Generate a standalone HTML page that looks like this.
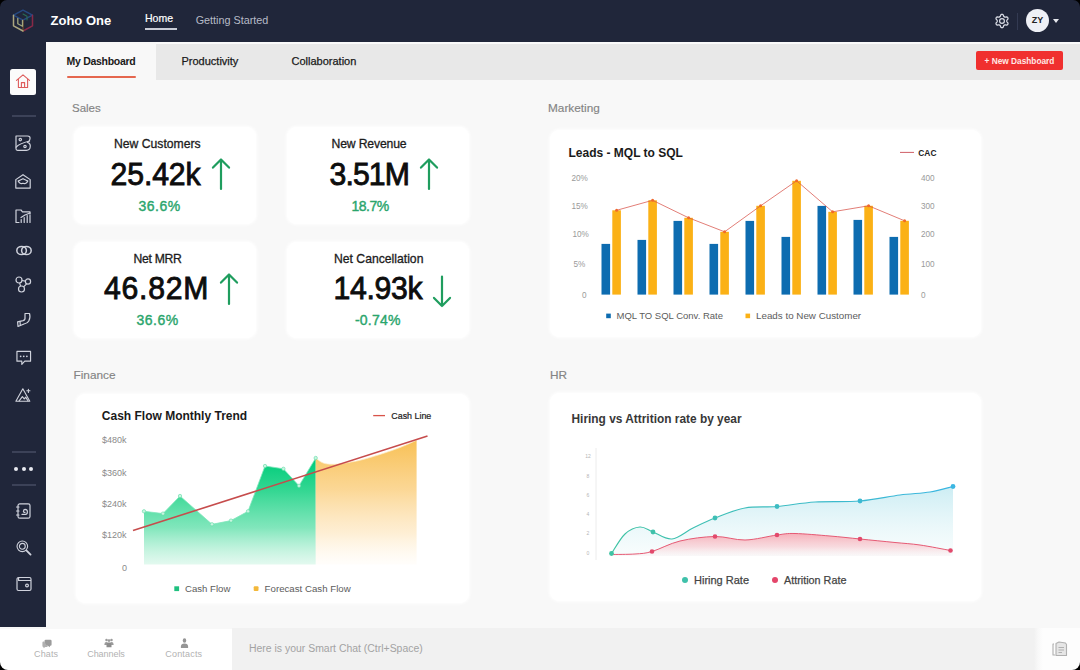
<!DOCTYPE html>
<html><head><meta charset="utf-8">
<style>
*{box-sizing:border-box;margin:0;padding:0}
html,body{width:1080px;height:670px;overflow:hidden;background:#000}
body{font-family:"Liberation Sans",sans-serif;position:relative}
#app{position:absolute;left:0;top:0;width:1080px;height:670px}
#content{left:0;top:40px;width:1080px;height:600px;background:#f8f8f8}
.abs{position:absolute}
#top{left:0;top:0;width:1080px;height:42px;background:#20263a;border-radius:7px 7px 0 0}
#side{left:0;top:42px;width:46px;height:585.4px;background:#20263a}
#tabs{left:46px;top:42px;width:1034px;height:38px;background:#e8e8e8}
#tabsline{left:46px;top:42px;width:1034px;height:2px;background:#fafafa}
#tab1{left:46px;top:42px;width:110px;height:38px;background:#f8f8f8}
.t{position:absolute;white-space:nowrap;line-height:1}
.card{position:absolute;background:#fff;border-radius:9px;box-shadow:0 0 3px 1px rgba(255,255,255,0.95)}
.sec{color:#848484;font-size:12px;-webkit-text-stroke:0.15px #848484}
.kt{color:#1c1c1c;font-size:12.2px;-webkit-text-stroke:0.3px #1c1c1c}
.kv{color:#0d0d0d;font-size:30.2px;-webkit-text-stroke:0.85px #0d0d0d;transform:scaleY(1.035);transform-origin:50% 82%}
.kp{color:#2aa56c;font-size:14px;-webkit-text-stroke:0.4px #2aa56c}
#bot1{left:0;top:628.6px;width:232px;height:41.4px;background:#fff;border-radius:0 0 0 8px}
#bot2{left:232px;top:628px;width:803px;height:42px;background:#f1f1f1}
#bot3{left:1034px;top:628px;width:46px;height:42px;background:linear-gradient(to right,#f1f1f1 0,#f8f8f8 4px,#fdfdfd 9px);border-radius:0 0 8px 0}
</style></head><body>
<div id="app">
<div id="content" class="abs"></div>
<div id="top" class="abs"></div>
<div id="side" class="abs"></div>
<div id="tabs" class="abs"></div>
<div id="tabsline" class="abs"></div>
<div id="tab1" class="abs"></div>

<!-- logo -->
<svg class="abs" style="left:11px;top:8px;opacity:0.85" width="24" height="25" viewBox="0 0 24 25">
 <g fill="none" stroke-width="1.5" stroke-linejoin="round" stroke-linecap="round">
  <path d="M12 2.2 L21.5 7.2 L12 12.2 L2.5 7.2 Z" stroke="#27508f"/>
  <path d="M21.5 7.2 L21.5 17.8 L12 23" stroke="#9b2a4a"/>
  <path d="M12 12.2 L12 23" stroke="#6b4a2a"/>
  <path d="M2.5 7.2 L2.500 17.800 L12 23" stroke="#c4bd8c"/>
  <path d="M6.8 10.500 L6.800 15.800 L11.500 18.300 V12.500" stroke="#b9bd8a" stroke-width="1.300"/>
  <path d="M12 6 L16 8.200 L16 12" stroke="#2c7a5a" stroke-width="1.100"/>
 </g>
</svg>
<div class="t" style="left:50.5px;top:14px;font-size:13px;font-weight:700;color:#fff">Zoho One</div>
<div class="t" style="left:145px;top:13px;font-size:10.5px;color:#fff;-webkit-text-stroke:0.2px #fff">Home</div>
<div class="abs" style="left:145px;top:28px;width:32px;height:1.5px;background:#c9ccd6"></div>
<div class="t" style="left:195.7px;top:14.8px;font-size:10.8px;color:#b7bbc7">Getting Started</div>
<!-- gear -->
<svg class="abs" style="left:993.5px;top:13.2px" width="16" height="16" viewBox="0 0 16 16">
 <path d="M13.80 11.35 L13.32 11.87 L12.60 12.14 L11.48 11.87 L10.83 11.90 L10.35 12.07 L9.96 12.40 L9.61 12.95 L9.29 14.06 L8.69 14.54 L8.00 14.70 L7.31 14.54 L6.71 14.06 L6.39 12.95 L6.04 12.40 L5.65 12.07 L5.17 11.90 L4.52 11.87 L3.40 12.14 L2.68 11.87 L2.20 11.35 L1.99 10.68 L2.11 9.91 L2.91 9.08 L3.21 8.50 L3.30 8.00 L3.21 7.50 L2.91 6.92 L2.11 6.09 L1.99 5.32 L2.20 4.65 L2.68 4.13 L3.40 3.86 L4.52 4.13 L5.17 4.10 L5.65 3.93 L6.04 3.60 L6.39 3.05 L6.71 1.94 L7.31 1.46 L8.00 1.30 L8.69 1.46 L9.29 1.94 L9.61 3.05 L9.96 3.60 L10.35 3.93 L10.83 4.10 L11.48 4.13 L12.60 3.86 L13.32 4.13 L13.80 4.65 L14.01 5.32 L13.89 6.09 L13.09 6.92 L12.79 7.50 L12.70 8.00 L12.79 8.50 L13.09 9.08 L13.89 9.91 L14.01 10.68 Z" fill="none" stroke="#d9dce5" stroke-width="1.25" stroke-linejoin="round"/>
 <circle cx="8" cy="8" r="2.4" fill="none" stroke="#d9dce5" stroke-width="1.2"/>
</svg>
<div class="abs" style="left:1017px;top:13px;width:1px;height:17px;background:#333a52"></div>
<div class="abs" style="left:1026px;top:9px;width:23px;height:23px;border-radius:50%;background:#eef0f6"></div>
<div class="t" style="left:1026px;top:16px;width:23px;text-align:center;font-size:9px;font-weight:700;color:#222">ZY</div>
<div class="abs" style="left:1053px;top:19px;width:0;height:0;border-left:3.5px solid transparent;border-right:3.5px solid transparent;border-top:4px solid #e6e8ee"></div>


<div class="abs" style="left:10px;top:69px;width:26px;height:26px;border-radius:2.5px;background:#fbfbfb"></div>
<svg class="abs" style="left:15px;top:73px" width="16" height="16" viewBox="0 0 16 16"><g fill="none" stroke="#de5b5b" stroke-width="1.1" stroke-linejoin="round" stroke-linecap="round">
 <path d="M1.5 7.3 L8 1.8 L14.5 7.3"/><path d="M3.4 6.2 V14.5 H12.6 V6.2"/><path d="M6.4 14.5 V9.6 H9.6 V14.5"/></g></svg>
<div class="abs" style="left:12px;top:115px;width:24px;height:1.5px;background:#3c4258"></div>

<!-- icon1: B-like -->
<svg class="abs" style="left:14px;top:134px" width="18" height="18" viewBox="0 0 18 18"><g fill="none" stroke="#cfd2dc" stroke-width="1.2" stroke-linejoin="round" stroke-linecap="round">
 <path d="M2 2 H13.5 Q16.5 2 16 5 Q15.6 7.6 13.5 8.4 Q16.8 9.5 16.2 13 Q15.8 16.3 12.5 16.3 H3.5 Q2 16.3 2 14.8 Z"/>
 <path d="M2.2 13.2 Q5 9.6 15.6 7"/><circle cx="6.3" cy="5.6" r="1.2"/><circle cx="11" cy="12.5" r="1.2"/></g></svg>
<!-- icon2: open envelope -->
<svg class="abs" style="left:14px;top:172.6px" width="18" height="17" viewBox="0 0 18 18" preserveAspectRatio="none"><g fill="none" stroke="#cfd2dc" stroke-width="1.2" stroke-linejoin="round" stroke-linecap="round">
 <path d="M1.8 7 L9 1.8 L16.2 7 V16 H1.8 Z"/><path d="M4.3 8.5 Q5.8 12.3 9 10.8 Q12.2 12.3 13.7 8.5"/><path d="M4.3 8.5 L9 6 L13.7 8.5"/></g></svg>
<!-- icon3: folder chart -->
<svg class="abs" style="left:14px;top:207px" width="18" height="18" viewBox="0 0 18 18"><g fill="none" stroke="#cfd2dc" stroke-width="1.2" stroke-linejoin="round" stroke-linecap="round">
 <path d="M5 15.5 H2 V3 H7 L8.5 4.8 H16 V7"/><path d="M7.2 15.5 V12.5 M10.2 15.5 V10.5 M13.2 15.5 V8.6 M16 15.5 V8"/><path d="M7 10.5 L11 8 L16 6"/></g></svg>
<!-- icon4: link rings -->
<svg class="abs" style="left:13.7px;top:242.6px" width="20" height="15" viewBox="0 0 20 15"><g fill="none" stroke="#cfd2dc" stroke-width="1.5">
 <ellipse cx="7.6" cy="7.5" rx="4.8" ry="4.1"/><ellipse cx="12.4" cy="7.5" rx="4.8" ry="4.1"/></g></svg>
<!-- icon5: nodes -->
<svg class="abs" style="left:14px;top:275px" width="19" height="19" viewBox="0 0 19 19"><g fill="none" stroke="#cfd2dc" stroke-width="1.2">
 <circle cx="5" cy="5" r="3"/><circle cx="14" cy="6.5" r="2.6"/><circle cx="7.5" cy="14" r="3"/><path d="M8 5.5 L11.4 6.2 M12.6 8.8 L9.6 11.8 M5.6 8 L6.6 11.1"/></g></svg>
<!-- icon6: hand/seat -->
<svg class="abs" style="left:15px;top:311px" width="18" height="18" viewBox="0 0 18 18"><g fill="none" stroke="#cfd2dc" stroke-width="1.2" stroke-linejoin="round" stroke-linecap="round">
 <path d="M10 2.5 H14.5 Q15.8 6.5 13.8 10 Q12.5 12.5 9 13 L3 15.5 L2.6 10.8 L8.2 9.6 Q10.5 8.8 10 6 Z"/><path d="M5 10.4 L5.3 14.4"/></g></svg>
<!-- icon7: chat -->
<svg class="abs" style="left:14.5px;top:348.5px" width="17.5" height="17.5" viewBox="0 0 18 18"><g fill="none" stroke="#cfd2dc" stroke-width="1.2" stroke-linejoin="round" stroke-linecap="round">
 <path d="M2 2.5 H16 V12.5 H10 L7 15.8 V12.5 H2 Z"/></g><g fill="#cfd2dc"><circle cx="5.8" cy="7.5" r="0.9"/><circle cx="9" cy="7.5" r="0.9"/><circle cx="12.2" cy="7.5" r="0.9"/></g></svg>
<!-- icon8: mountains -->
<svg class="abs" style="left:14.2px;top:386.2px" width="18.6" height="17.6" viewBox="0 0 20 19"><g fill="none" stroke="#cfd2dc" stroke-width="1.2" stroke-linejoin="round" stroke-linecap="round">
 <path d="M2 16.5 L9.5 3 L17 16.5 Z"/><path d="M5.5 16 L9 11.5 L11 14 L12.6 12 L15 16"/><path d="M15.5 3.5 V7 M13.8 5.2 H17.2"/></g></svg>
<div class="abs" style="left:12px;top:451.2px;width:24px;height:1.5px;background:#3c4258"></div>
<div class="abs" style="left:14.3px;top:466.7px;width:4px;height:4px;border-radius:50%;background:#e8eaf0"></div>
<div class="abs" style="left:21.8px;top:466.7px;width:4px;height:4px;border-radius:50%;background:#e8eaf0"></div>
<div class="abs" style="left:29.3px;top:466.7px;width:4px;height:4px;border-radius:50%;background:#e8eaf0"></div>
<div class="abs" style="left:12px;top:484.2px;width:24px;height:1.5px;background:#3c4258"></div>
<!-- icon9: notebook -->
<svg class="abs" style="left:15px;top:502px" width="17" height="18" viewBox="0 0 17 18"><g fill="none" stroke="#cfd2dc" stroke-width="1.2" stroke-linejoin="round" stroke-linecap="round">
 <rect x="3" y="1.8" width="12" height="14.4" rx="1.8"/><path d="M1.5 5 H4 M1.5 9 H4 M1.5 13 H4"/><path d="M7 12.4 H10.5 Q12.4 12.4 12.4 9.8 Q12.4 7.4 10 7.4 Q8.4 7.6 8.4 9.4 Q8.6 10.6 10 10.3"/></g></svg>
<!-- icon10: search -->
<svg class="abs" style="left:15.4px;top:539.2px" width="17.4" height="17.4" viewBox="0 0 19 19"><g fill="none" stroke="#cfd2dc" stroke-width="1.2" stroke-linecap="round">
 <circle cx="8" cy="8" r="5.8"/><circle cx="8" cy="8" r="3.2"/><path d="M12.4 12.4 L17 17" stroke-width="2"/></g></svg>
<!-- icon11: wallet -->
<svg class="abs" style="left:14.9px;top:575.4px" width="18" height="18" viewBox="0 0 18 18"><g fill="none" stroke="#cfd2dc" stroke-width="1.2" stroke-linejoin="round" stroke-linecap="round">
 <path d="M3.6 2.5 H14.5 Q16 2.5 16 4 V14 Q16 15.5 14.5 15.5 H3.5 Q2 15.5 2 14 V4.5 Q2 2.5 3.6 2.5 V5.5 H16"/><circle cx="12" cy="10.5" r="1.4"/></g></svg>


<div class="t" style="left:66.5px;top:55.8px;font-size:10.5px;font-weight:700;color:#1a1a1a;letter-spacing:-0.28px">My Dashboard</div>
<div class="abs" style="left:67px;top:76.4px;width:69px;height:1.8px;background:#e5674f;border-radius:1px"></div>
<div class="t" style="left:181.5px;top:56px;font-size:11px;color:#1a1a1a;-webkit-text-stroke:0.25px #1a1a1a">Productivity</div>
<div class="t" style="left:291.5px;top:56px;font-size:11px;color:#1a1a1a;-webkit-text-stroke:0.25px #1a1a1a">Collaboration</div>
<div class="abs" style="left:975.8px;top:51.4px;width:87.6px;height:18.8px;border-radius:2px;background:#f0302f"></div>
<div class="t" style="left:976px;top:57px;width:87px;text-align:center;font-size:8.3px;font-weight:700;color:#ffe9e6">+ New Dashboard</div>

<div class="t sec" style="left:72px;top:103px;font-size:11.5px">Sales</div>
<div class="card" style="left:74px;top:127px;width:182px;height:96.8px">
 <div class="t kt" style="left:40px;top:11px">New Customers</div>
 <div class="t kv" style="left:36.5px;top:32.5px;letter-spacing:-0.1px">25.42k</div>
 <svg class="abs" style="left:137px;top:31px" width="20" height="33" viewBox="0 0 20 33"><g fill="none" stroke="#1f9d5e" stroke-width="2.2" stroke-linecap="round" stroke-linejoin="round"><path d="M10 1.5 V31 M2 9.6 L10 1.5 L18 9.6"/></g></svg>
 <div class="t kp" style="left:64.5px;top:71.5px;letter-spacing:0.5px">36.6%</div>
</div>
<div class="card" style="left:287px;top:127px;width:182px;height:96.8px">
 <div class="t kt" style="left:44.5px;top:11px;letter-spacing:-0.15px">New Revenue</div>
 <div class="t kv" style="left:42.5px;top:32.5px;letter-spacing:-0.9px">3.51M</div>
 <svg class="abs" style="left:132px;top:31px" width="20" height="33" viewBox="0 0 20 33"><g fill="none" stroke="#1f9d5e" stroke-width="2.2" stroke-linecap="round" stroke-linejoin="round"><path d="M10 1.5 V31 M2 9.6 L10 1.5 L18 9.6"/></g></svg>
 <div class="t kp" style="left:64.5px;top:71.5px;letter-spacing:-0.5px">18.7%</div>
</div>
<div class="card" style="left:74px;top:241.7px;width:182px;height:96px">
 <div class="t kt" style="left:59.5px;top:11px;letter-spacing:-0.3px">Net MRR</div>
 <div class="t kv" style="left:30px;top:32.5px;letter-spacing:0.75px">46.82M</div>
 <svg class="abs" style="left:145px;top:31px" width="20" height="33" viewBox="0 0 20 33"><g fill="none" stroke="#1f9d5e" stroke-width="2.2" stroke-linecap="round" stroke-linejoin="round"><path d="M10 1.5 V31 M2 9.6 L10 1.5 L18 9.6"/></g></svg>
 <div class="t kp" style="left:62.5px;top:71.5px;letter-spacing:0.5px">36.6%</div>
</div>
<div class="card" style="left:287px;top:241.7px;width:182px;height:96px">
 <div class="t kt" style="left:47px;top:11px">Net Cancellation</div>
 <div class="t kv" style="left:46.5px;top:32.5px;letter-spacing:-0.3px">14.93k</div>
 <svg class="abs" style="left:144.5px;top:33px" width="20" height="33" viewBox="0 0 20 33"><g fill="none" stroke="#1f9d5e" stroke-width="2.2" stroke-linecap="round" stroke-linejoin="round"><path d="M10 1.5 V31 M2 22.9 L10 31 L18 22.9"/></g></svg>
 <div class="t kp" style="left:68px;top:71.5px;letter-spacing:0.2px">-0.74%</div>
</div>
<div class="t sec" style="left:548px;top:103px;font-size:11.8px">Marketing</div>
<div class="card" style="left:550px;top:130px;width:431px;height:207px">
<div class="t" style="left:18.5px;top:17px;font-size:12px;font-weight:700;color:#1a1a1a">Leads - MQL to SQL</div>
<svg class="abs" style="left:0;top:0;font-family:'Liberation Sans',sans-serif" width="431" height="207" viewBox="0 0 431 207"><rect x="51.5" y="113.9" width="8.6" height="50.7" fill="#0d6cb0"/><rect x="62.3" y="80.3" width="8.6" height="84.3" fill="#fbb116"/><rect x="87.5" y="109.9" width="8.6" height="54.7" fill="#0d6cb0"/><rect x="98.3" y="70.3" width="8.6" height="94.3" fill="#fbb116"/><rect x="123.5" y="90.9" width="8.6" height="73.7" fill="#0d6cb0"/><rect x="134.3" y="87.8" width="8.6" height="76.8" fill="#fbb116"/><rect x="159.5" y="113.9" width="8.6" height="50.7" fill="#0d6cb0"/><rect x="170.3" y="101.8" width="8.6" height="62.8" fill="#fbb116"/><rect x="195.5" y="90.9" width="8.6" height="73.7" fill="#0d6cb0"/><rect x="206.3" y="75.8" width="8.6" height="88.8" fill="#fbb116"/><rect x="231.5" y="106.9" width="8.6" height="57.7" fill="#0d6cb0"/><rect x="242.3" y="50.8" width="8.6" height="113.8" fill="#fbb116"/><rect x="267.5" y="75.9" width="8.6" height="88.7" fill="#0d6cb0"/><rect x="278.3" y="81.8" width="8.6" height="82.8" fill="#fbb116"/><rect x="303.5" y="89.9" width="8.6" height="74.7" fill="#0d6cb0"/><rect x="314.3" y="75.8" width="8.6" height="88.8" fill="#fbb116"/><rect x="339.5" y="106.9" width="8.6" height="57.7" fill="#0d6cb0"/><rect x="350.3" y="90.8" width="8.6" height="73.8" fill="#fbb116"/><polyline points="66.6,80.3 102.6,70.3 138.6,87.8 174.6,101.8 210.6,75.8 246.6,50.8 282.6,81.8 318.6,75.8 354.6,90.8" fill="none" stroke="#d8534a" stroke-width="1" stroke-opacity="0.75"/><circle cx="66.6" cy="80.3" r="1.5" fill="#f0682c"/><circle cx="102.6" cy="70.3" r="1.5" fill="#f0682c"/><circle cx="138.6" cy="87.8" r="1.5" fill="#f0682c"/><circle cx="174.6" cy="101.8" r="1.5" fill="#f0682c"/><circle cx="210.6" cy="75.8" r="1.5" fill="#f0682c"/><circle cx="246.6" cy="50.8" r="1.5" fill="#f0682c"/><circle cx="282.6" cy="81.8" r="1.5" fill="#f0682c"/><circle cx="318.6" cy="75.8" r="1.5" fill="#f0682c"/><circle cx="354.6" cy="90.8" r="1.5" fill="#f0682c"/><text x="21.5" y="50.5" font-size="8.2" fill="#9a9a9a" text-anchor="start" font-weight="400">20%</text><text x="21.5" y="78.5" font-size="8.2" fill="#9a9a9a" text-anchor="start" font-weight="400">15%</text><text x="22.5" y="106.9" font-size="8.2" fill="#9a9a9a" text-anchor="start" font-weight="400">10%</text><text x="23.5" y="137.0" font-size="8.2" fill="#9a9a9a" text-anchor="start" font-weight="400">5%</text><text x="32.0" y="167.8" font-size="8.2" fill="#9a9a9a" text-anchor="start" font-weight="400">0</text><text x="371.0" y="50.5" font-size="8.2" fill="#9a9a9a" text-anchor="start" font-weight="400">400</text><text x="371.0" y="78.5" font-size="8.2" fill="#9a9a9a" text-anchor="start" font-weight="400">300</text><text x="371.0" y="106.9" font-size="8.2" fill="#9a9a9a" text-anchor="start" font-weight="400">200</text><text x="371.0" y="137.0" font-size="8.2" fill="#9a9a9a" text-anchor="start" font-weight="400">100</text><text x="371.0" y="167.8" font-size="8.2" fill="#9a9a9a" text-anchor="start" font-weight="400">0</text><rect x="56.2" y="183.6" width="4.6" height="4.6" fill="#0d6cb0"/><text x="66.5" y="189.3" font-size="9.5" fill="#5c5c5c" text-anchor="start" font-weight="400">MQL TO SQL Conv. Rate</text><rect x="195.5" y="183.6" width="4.6" height="4.6" fill="#fbb116"/><text x="206.0" y="189.3" font-size="9.8" fill="#5c5c5c" text-anchor="start" font-weight="400">Leads to New Customer</text><line x1="350" y1="22.4" x2="364" y2="22.4" stroke="#cf5f66" stroke-width="1"/><text x="368.3" y="25.5" font-size="8.4" fill="#222" text-anchor="start" font-weight="700">CAC</text></svg>
</div>
<div class="t sec" style="left:73.5px;top:369.5px;font-size:11.8px">Finance</div>
<div class="card" style="left:75.5px;top:394px;width:393.5px;height:209px">
<div class="t" style="left:26.3px;top:15.5px;font-size:12px;font-weight:700;color:#1a1a1a">Cash Flow Monthly Trend</div>
<svg class="abs" style="left:0.5px;top:0;font-family:'Liberation Sans',sans-serif" width="393" height="208" viewBox="0 0 393 208"><defs><linearGradient id="gg" gradientUnits="userSpaceOnUse" x1="0" y1="66" x2="0" y2="170.5"><stop offset="0" stop-color="#00cc7a"/><stop offset="0.3" stop-color="#2fd690" stop-opacity="0.97"/><stop offset="0.65" stop-color="#6be2b0" stop-opacity="0.85"/><stop offset="1" stop-color="#aeeed2" stop-opacity="0.35"/></linearGradient>
<linearGradient id="yg" gradientUnits="userSpaceOnUse" x1="0" y1="46" x2="0" y2="170.5"><stop offset="0" stop-color="#f8c055"/><stop offset="0.4" stop-color="#fbd38a" stop-opacity="0.9"/><stop offset="0.75" stop-color="#fde4b8" stop-opacity="0.6"/><stop offset="1" stop-color="#fff1d8" stop-opacity="0.1"/></linearGradient></defs><polygon points="68.0,170.5 68.0,117.3 87.0,119.6 104.0,102.0 136.0,130.3 155.0,126.6 172.0,117.3 189.0,72.0 207.4,74.8 223.0,91.8 239.7,64.0 239.7,170.5" fill="url(#gg)"/><path d="M239.7 64.0 C240.8 64.8 243.6 67.4 246.0 68.5 C248.4 69.6 251.0 70.1 254.0 70.3 C257.0 70.5 260.7 70.2 264.0 69.8 C267.3 69.4 270.7 68.8 274.0 68.2 C277.3 67.6 279.0 67.6 284.0 66.3 C289.0 65.0 297.3 62.6 304.0 60.5 C310.7 58.4 317.9 55.9 324.0 53.5 C330.1 51.1 337.8 47.5 340.6 46.3 L340.6 170.5 L239.7 170.5 Z" fill="url(#yg)"/><polyline points="68.0,117.3 87.0,119.6 104.0,102.0 136.0,130.3 155.0,126.6 172.0,117.3 189.0,72.0 207.4,74.8 223.0,91.8 239.7,64.0" fill="none" stroke="#7fe6bc" stroke-width="1" stroke-opacity="0.8"/><path d="M239.7 64.0 C240.8 64.8 243.6 67.4 246.0 68.5 C248.4 69.6 251.0 70.1 254.0 70.3 C257.0 70.5 260.7 70.2 264.0 69.8 C267.3 69.4 270.7 68.8 274.0 68.2 C277.3 67.6 279.0 67.6 284.0 66.3 C289.0 65.0 297.3 62.6 304.0 60.5 C310.7 58.4 317.9 55.9 324.0 53.5 C330.1 51.1 337.8 47.5 340.6 46.3" fill="none" stroke="#fdeac4" stroke-width="0.8" stroke-opacity="0.9"/><circle cx="68.0" cy="117.3" r="1.7" fill="#c9f5e1" stroke="#5fdca6" stroke-width="0.6"/><circle cx="87.0" cy="119.6" r="1.7" fill="#c9f5e1" stroke="#5fdca6" stroke-width="0.6"/><circle cx="104.0" cy="102.0" r="1.7" fill="#c9f5e1" stroke="#5fdca6" stroke-width="0.6"/><circle cx="136.0" cy="130.3" r="1.7" fill="#c9f5e1" stroke="#5fdca6" stroke-width="0.6"/><circle cx="155.0" cy="126.6" r="1.7" fill="#c9f5e1" stroke="#5fdca6" stroke-width="0.6"/><circle cx="172.0" cy="117.3" r="1.7" fill="#c9f5e1" stroke="#5fdca6" stroke-width="0.6"/><circle cx="189.0" cy="72.0" r="1.7" fill="#c9f5e1" stroke="#5fdca6" stroke-width="0.6"/><circle cx="207.4" cy="74.8" r="1.7" fill="#c9f5e1" stroke="#5fdca6" stroke-width="0.6"/><circle cx="223.0" cy="91.8" r="1.7" fill="#c9f5e1" stroke="#5fdca6" stroke-width="0.6"/><circle cx="239.7" cy="64.0" r="1.7" fill="#c9f5e1" stroke="#5fdca6" stroke-width="0.6"/><line x1="57" y1="136.6" x2="351.5" y2="42" stroke="#c64c4c" stroke-width="1.6"/><text x="26.0" y="49.0" font-size="9" fill="#8a8a8a" text-anchor="start" font-weight="400" >$480k</text><text x="26.0" y="81.8" font-size="9" fill="#8a8a8a" text-anchor="start" font-weight="400" >$360k</text><text x="26.0" y="113.4" font-size="9" fill="#8a8a8a" text-anchor="start" font-weight="400" >$240k</text><text x="26.0" y="143.7" font-size="9" fill="#8a8a8a" text-anchor="start" font-weight="400" >$120k</text><text x="46.0" y="176.6" font-size="9" fill="#8a8a8a" text-anchor="start" font-weight="400" >0</text><rect x="98.3" y="192.3" width="4.8" height="4.8" fill="#1fc07f"/><text x="109.0" y="197.9" font-size="9.6" fill="#5c5c5c" text-anchor="start" font-weight="400" >Cash Flow</text><rect x="177.7" y="192.3" width="4.8" height="4.8" rx="1" fill="#f3b83a"/><text x="188.6" y="197.9" font-size="9.7" fill="#5c5c5c" text-anchor="start" font-weight="400" >Forecast Cash Flow</text><line x1="297.2" y1="21.6" x2="309" y2="21.6" stroke="#d8534a" stroke-width="1.3"/><text x="315.3" y="25.0" font-size="8.9" fill="#222" text-anchor="start" font-weight="400" stroke="#222" stroke-width="0.2">Cash Line</text></svg>
</div>
<div class="t sec" style="left:550px;top:369.5px;font-size:11.8px">HR</div>
<div class="card" style="left:550px;top:393px;width:431px;height:208px">
<div class="t" style="left:21.5px;top:21px;font-size:11.9px;font-weight:700;color:#383838">Hiring vs Attrition rate by year</div>
<svg class="abs" style="left:0;top:0;font-family:'Liberation Sans',sans-serif" width="431" height="208" viewBox="0 0 431 208"><defs>
<linearGradient id="hl" x1="0" y1="0" x2="1" y2="0"><stop offset="0" stop-color="#3fc3a3"/><stop offset="1" stop-color="#3bb6e2"/></linearGradient>
<linearGradient id="hf" gradientUnits="userSpaceOnUse" x1="0" y1="93" x2="0" y2="163"><stop offset="0" stop-color="#c9ecf3" stop-opacity="0.95"/><stop offset="1" stop-color="#ebf8f9" stop-opacity="0.35"/></linearGradient>
<linearGradient id="af" gradientUnits="userSpaceOnUse" x1="0" y1="140" x2="0" y2="163"><stop offset="0" stop-color="#f7aab4" stop-opacity="0.95"/><stop offset="0.6" stop-color="#f9ccd2" stop-opacity="0.7"/><stop offset="1" stop-color="#fdeaec" stop-opacity="0.25"/></linearGradient>
</defs><path d="M61.5 160.5 C63.8 157.2 70.2 145.4 75.0 141.0 C79.8 136.6 85.3 134.3 90.0 134.0 C94.7 133.7 97.7 137.0 103.0 139.0 C108.3 141.0 115.3 146.7 122.0 146.0 C128.7 145.3 135.8 138.5 143.0 135.0 C150.2 131.5 156.3 128.3 165.0 125.0 C173.7 121.7 184.7 116.9 195.0 115.0 C205.3 113.1 215.3 114.5 227.0 113.5 C238.7 112.5 251.2 109.9 265.0 109.0 C278.8 108.1 295.8 109.2 310.0 108.0 C324.2 106.8 338.3 103.5 350.0 102.0 C361.7 100.5 371.2 100.4 380.0 99.0 C388.8 97.6 399.2 94.4 403.0 93.5 L403 163 L61.5 163 Z" fill="url(#hf)"/><path d="M61.5 161.5 C65.4 161.4 78.2 161.5 85.0 161.0 C91.8 160.5 94.5 160.7 102.0 158.5 C109.5 156.3 119.5 150.5 130.0 148.0 C140.5 145.5 154.2 143.7 165.0 143.5 C175.8 143.3 184.7 147.2 195.0 147.0 C205.3 146.8 218.7 143.1 227.0 142.0 C235.3 140.9 236.2 140.3 245.0 140.5 C253.8 140.7 269.2 142.1 280.0 143.0 C290.8 143.9 299.2 144.9 310.0 146.0 C320.8 147.1 335.0 148.5 345.0 149.5 C355.0 150.5 360.8 150.7 370.0 152.0 C379.2 153.3 395.4 156.6 400.5 157.5 L400.5 163 L61.5 163 Z" fill="url(#af)"/><path d="M61.5 160.5 C63.8 157.2 70.2 145.4 75.0 141.0 C79.8 136.6 85.3 134.3 90.0 134.0 C94.7 133.7 97.7 137.0 103.0 139.0 C108.3 141.0 115.3 146.7 122.0 146.0 C128.7 145.3 135.8 138.5 143.0 135.0 C150.2 131.5 156.3 128.3 165.0 125.0 C173.7 121.7 184.7 116.9 195.0 115.0 C205.3 113.1 215.3 114.5 227.0 113.5 C238.7 112.5 251.2 109.9 265.0 109.0 C278.8 108.1 295.8 109.2 310.0 108.0 C324.2 106.8 338.3 103.5 350.0 102.0 C361.7 100.5 371.2 100.4 380.0 99.0 C388.8 97.6 399.2 94.4 403.0 93.5" fill="none" stroke="url(#hl)" stroke-width="1.15"/><path d="M61.5 161.5 C65.4 161.4 78.2 161.5 85.0 161.0 C91.8 160.5 94.5 160.7 102.0 158.5 C109.5 156.3 119.5 150.5 130.0 148.0 C140.5 145.5 154.2 143.7 165.0 143.5 C175.8 143.3 184.7 147.2 195.0 147.0 C205.3 146.8 218.7 143.1 227.0 142.0 C235.3 140.9 236.2 140.3 245.0 140.5 C253.8 140.7 269.2 142.1 280.0 143.0 C290.8 143.9 299.2 144.9 310.0 146.0 C320.8 147.1 335.0 148.5 345.0 149.5 C355.0 150.5 360.8 150.7 370.0 152.0 C379.2 153.3 395.4 156.6 400.5 157.5" fill="none" stroke="#e65a74" stroke-width="1"/><circle cx="61.5" cy="160.5" r="2.4" fill="#3fc3a3"/><circle cx="103" cy="139" r="2.4" fill="#3fc1aa"/><circle cx="165" cy="125" r="2.4" fill="#3ebfb5"/><circle cx="227" cy="113.5" r="2.4" fill="#3dbcc2"/><circle cx="310" cy="108" r="2.4" fill="#3cb9d2"/><circle cx="403" cy="93.5" r="2.4" fill="#3bb6e2"/><circle cx="102" cy="158.5" r="2.3" fill="#e24a6c"/><circle cx="165" cy="143.5" r="2.3" fill="#e24a6c"/><circle cx="227" cy="142" r="2.3" fill="#e24a6c"/><circle cx="310" cy="146" r="2.3" fill="#e24a6c"/><circle cx="400.5" cy="157.5" r="2.3" fill="#e24a6c"/><line x1="46" y1="55" x2="46" y2="167" stroke="#ececec" stroke-width="1"/><text x="38.0" y="65.1" font-size="5" fill="#b5b5b5" text-anchor="middle" font-weight="400">12</text><text x="38.0" y="84.6" font-size="5" fill="#b5b5b5" text-anchor="middle" font-weight="400">8</text><text x="38.0" y="104.0" font-size="5" fill="#b5b5b5" text-anchor="middle" font-weight="400">6</text><text x="38.0" y="123.0" font-size="5" fill="#b5b5b5" text-anchor="middle" font-weight="400">4</text><text x="38.0" y="142.4" font-size="5" fill="#b5b5b5" text-anchor="middle" font-weight="400">2</text><text x="38.0" y="161.5" font-size="5" fill="#b5b5b5" text-anchor="middle" font-weight="400">0</text><circle cx="135" cy="187" r="3" fill="#3fc1aa"/><text x="144.0" y="191.0" font-size="11" fill="#444" stroke="#444" stroke-width="0.25" text-anchor="start" font-weight="400">Hiring Rate</text><circle cx="225" cy="187" r="3" fill="#e4456a"/><text x="234.0" y="191.0" font-size="10.8" fill="#444" stroke="#444" stroke-width="0.25" text-anchor="start" font-weight="400">Attrition Rate</text></svg>
</div>

<div id="bot1" class="abs"></div>
<div id="bot2" class="abs"></div>
<div id="bot3" class="abs"></div>

<svg class="abs" style="left:42px;top:638.5px" width="10" height="10" viewBox="0 0 12 11"><path d="M4.5 0.5 H10 Q11.5 0.5 11.5 2 V6 Q11.5 7.5 10 7.5 H9.5 V9.5 L7 7.5 H4.5 Q3 7.5 3 6 V2 Q3 0.5 4.5 0.5 Z" fill="#9b9b9b"/><path d="M2.5 2.5 H1.8 Q0.5 2.5 0.5 3.8 V7.8 Q0.5 9 1.8 9 V10.6 L4 9 H7" fill="#b0b0b0"/></svg>
<div class="t" style="left:34px;top:650px;font-size:9px;color:#b2b2b2;letter-spacing:0.15px">Chats</div>
<svg class="abs" style="left:104px;top:638px" width="10" height="10" viewBox="0 0 12 11"><g fill="#9b9b9b"><circle cx="3" cy="2" r="1.5"/><circle cx="9" cy="2" r="1.5"/><circle cx="6" cy="2.6" r="1.7"/><path d="M0.500 7 Q0.500 4.2 3 4.2 Q4 4.2 4.500 5 H7.500 Q8 4.2 9 4.2 Q11.500 4.2 11.500 7 V8 H0.500 Z"/><path d="M3 10.500 V8 Q3 5.2 6 5.200 Q9 5.2 9 8 V10.500 Z" fill="#8c8c8c"/></g></svg>
<div class="t" style="left:87.2px;top:650px;font-size:9px;color:#b2b2b2;letter-spacing:-0.05px">Channels</div>
<svg class="abs" style="left:179.500px;top:637.500px" width="9" height="10.500" viewBox="0 0 12 11" preserveAspectRatio="none"><g fill="#959595"><circle cx="6" cy="2.6" r="2.3"/><path d="M1.200 10.800 V9 Q1.200 5.8 6 5.800 Q10.800 5.8 10.800 9 V10.800 Z"/></g></svg>
<div class="t" style="left:165.3px;top:650px;font-size:9px;color:#b2b2b2;letter-spacing:0.18px">Contacts</div>
<div class="t" style="left:249px;top:643.5px;font-size:10.45px;color:#a3a3a3">Here is your Smart Chat (Ctrl+Space)</div>
<svg class="abs" style="left:1051px;top:640px" width="18" height="18" viewBox="0 0 18 18"><g fill="none" stroke="#b0b0b0" stroke-width="1.1" stroke-linejoin="round"><path d="M3 4 H2 V15 H4"/><path d="M5 3.5 L8 2 L14.5 3 L15.5 4.5 V15.5 H5 Z" fill="#e6e6e6"/><path d="M7.5 7.5 H13 M7.5 10 H13 M7.5 12.5 H11"/></g></svg>

</div>
</body></html>
